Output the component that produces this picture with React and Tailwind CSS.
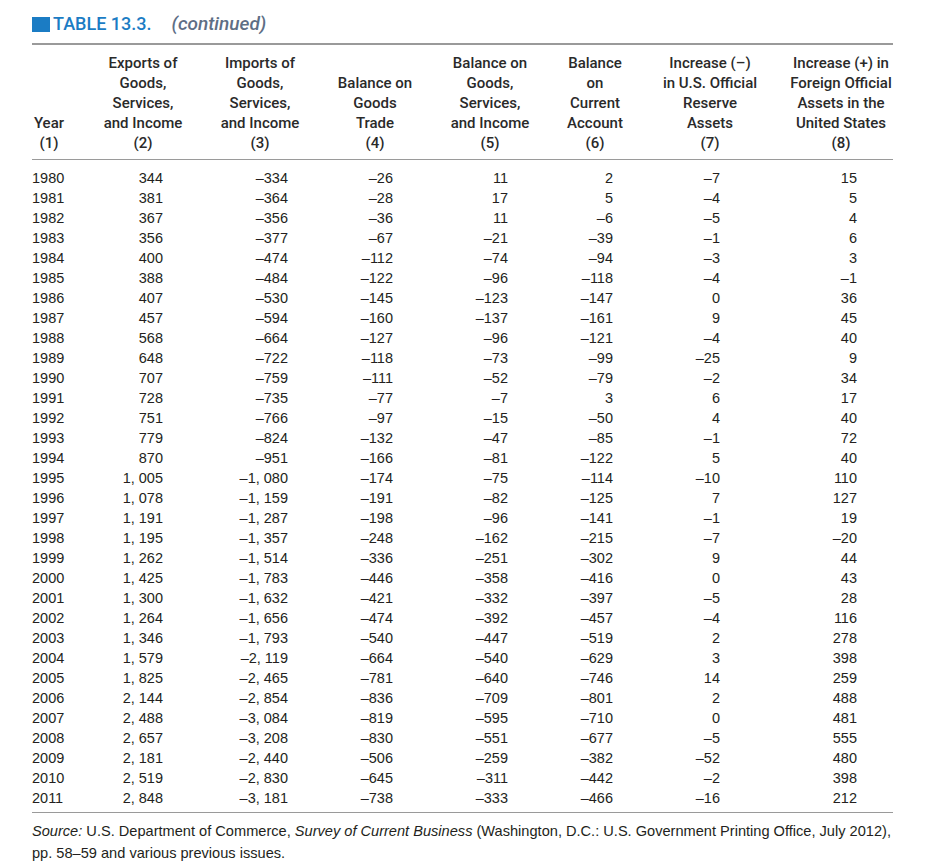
const rows = [
  ['1980', '344', '–334', '–26', '11', '2', '–7', '15'],
  ['1981', '381', '–364', '–28', '17', '5', '–4', '5'],
  ['1982', '367', '–356', '–36', '11', '–6', '–5', '4'],
  ['1983', '356', '–377', '–67', '–21', '–39', '–1', '6'],
  ['1984', '400', '–474', '–112', '–74', '–94', '–3', '3'],
  ['1985', '388', '–484', '–122', '–96', '–118', '–4', '–1'],
  ['1986', '407', '–530', '–145', '–123', '–147', '0', '36'],
  ['1987', '457', '–594', '–160', '–137', '–161', '9', '45'],
  ['1988', '568', '–664', '–127', '–96', '–121', '–4', '40'],
  ['1989', '648', '–722', '–118', '–73', '–99', '–25', '9'],
  ['1990', '707', '–759', '–111', '–52', '–79', '–2', '34'],
  ['1991', '728', '–735', '–77', '–7', '3', '6', '17'],
  ['1992', '751', '–766', '–97', '–15', '–50', '4', '40'],
  ['1993', '779', '–824', '–132', '–47', '–85', '–1', '72'],
  ['1994', '870', '–951', '–166', '–81', '–122', '5', '40'],
  ['1995', '1, 005', '–1, 080', '–174', '–75', '–114', '–10', '110'],
  ['1996', '1, 078', '–1, 159', '–191', '–82', '–125', '7', '127'],
  ['1997', '1, 191', '–1, 287', '–198', '–96', '–141', '–1', '19'],
  ['1998', '1, 195', '–1, 357', '–248', '–162', '–215', '–7', '–20'],
  ['1999', '1, 262', '–1, 514', '–336', '–251', '–302', '9', '44'],
  ['2000', '1, 425', '–1, 783', '–446', '–358', '–416', '0', '43'],
  ['2001', '1, 300', '–1, 632', '–421', '–332', '–397', '–5', '28'],
  ['2002', '1, 264', '–1, 656', '–474', '–392', '–457', '–4', '116'],
  ['2003', '1, 346', '–1, 793', '–540', '–447', '–519', '2', '278'],
  ['2004', '1, 579', '–2, 119', '–664', '–540', '–629', '3', '398'],
  ['2005', '1, 825', '–2, 465', '–781', '–640', '–746', '14', '259'],
  ['2006', '2, 144', '–2, 854', '–836', '–709', '–801', '2', '488'],
  ['2007', '2, 488', '–3, 084', '–819', '–595', '–710', '0', '481'],
  ['2008', '2, 657', '–3, 208', '–830', '–551', '–677', '–5', '555'],
  ['2009', '2, 181', '–2, 440', '–506', '–259', '–382', '–52', '480'],
  ['2010', '2, 519', '–2, 830', '–645', '–311', '–442', '–2', '398'],
  ['2011', '2, 848', '–3, 181', '–738', '–333', '–466', '–16', '212'],
];

const headers = [
  ['Year', '(1)'],
  ['Exports of', 'Goods,', 'Services,', 'and Income', '(2)'],
  ['Imports of', 'Goods,', 'Services,', 'and Income', '(3)'],
  ['Balance on', 'Goods', 'Trade', '(4)'],
  ['Balance on', 'Goods,', 'Services,', 'and Income', '(5)'],
  ['Balance', 'on', 'Current', 'Account', '(6)'],
  ['Increase (–)', 'in U.S. Official', 'Reserve', 'Assets', '(7)'],
  ['Increase (+) in', 'Foreign Official', 'Assets in the', 'United States', '(8)'],
];

// right padding for each numeric column so the figures line up under the headings
const cellPad = [
  'text-left',
  'text-right pr-[57px]',
  'text-right pr-[12px]',
  'text-right pr-[57px]',
  'text-right pr-[22px]',
  'text-right pr-[47px]',
  'text-right pr-[40px]',
  'text-right pr-[65px]',
];

const gridCols = 'grid grid-cols-[34px_154px_80px_150px_80px_130px_100px_162px]';

export default function App() {
  return (
    <div className="w-[941px] h-[865px] bg-white pl-[32px] text-[#231f20] font-['Liberation_Sans',sans-serif] overflow-hidden">
      {/* Title */}
      <div className="flex items-center mt-[12px] h-[24px]">
        <span className="block w-[18px] h-[15px] bg-[#1b7cc4]" />
        <span className="ml-[3px] text-[18px] leading-[24px] font-medium text-[#1b7cc4] font-['Roboto','Liberation_Sans',sans-serif]">
          TABLE 13.3.
        </span>
        <span className="ml-[20px] text-[19px] leading-[24px] italic font-medium text-[#5e6e85] font-['Roboto','Liberation_Sans',sans-serif]">
          (continued)
        </span>
      </div>

      <div className="mt-[7px] h-[2px] w-[861px] bg-[#9a9a9a]" />

      {/* Column headings */}
      <div className={`${gridCols} mt-[8px] text-[15px] leading-[20px] font-medium text-[#2a2a2a] font-['Roboto','Liberation_Sans',sans-serif]`}>
        {headers.map((lines, i) => (
          <div key={i} className="flex flex-col justify-end items-center text-center whitespace-nowrap">
            {lines.map((l, j) => (
              <span key={j}>{l}</span>
            ))}
          </div>
        ))}
      </div>

      <div className="mt-[6px] h-px w-[861px] bg-[#9a9a9a]" />

      {/* Data rows */}
      <div className="mt-[8px] text-[14.5px] leading-[20px]">
        {rows.map((r) => (
          <div key={r[0]} className={gridCols}>
            {r.map((v, i) => (
              <span key={i} className={`whitespace-nowrap ${cellPad[i]}`}>
                {v}
              </span>
            ))}
          </div>
        ))}
      </div>

      <div className="mt-[4px] h-px w-[861px] bg-[#9a9a9a]" />

      {/* Source note */}
      <div className="mt-[7px] text-[14.6px] leading-[22px] w-[880px]">
        <p className="whitespace-nowrap">
          <span className="italic">Source:</span> U.S. Department of Commerce,{' '}
          <span className="italic">Survey of Current Business</span> (Washington, D.C.: U.S. Government Printing
          Office, July 2012),
        </p>
        <p>pp. 58–59 and various previous issues.</p>
      </div>
    </div>
  );
}
